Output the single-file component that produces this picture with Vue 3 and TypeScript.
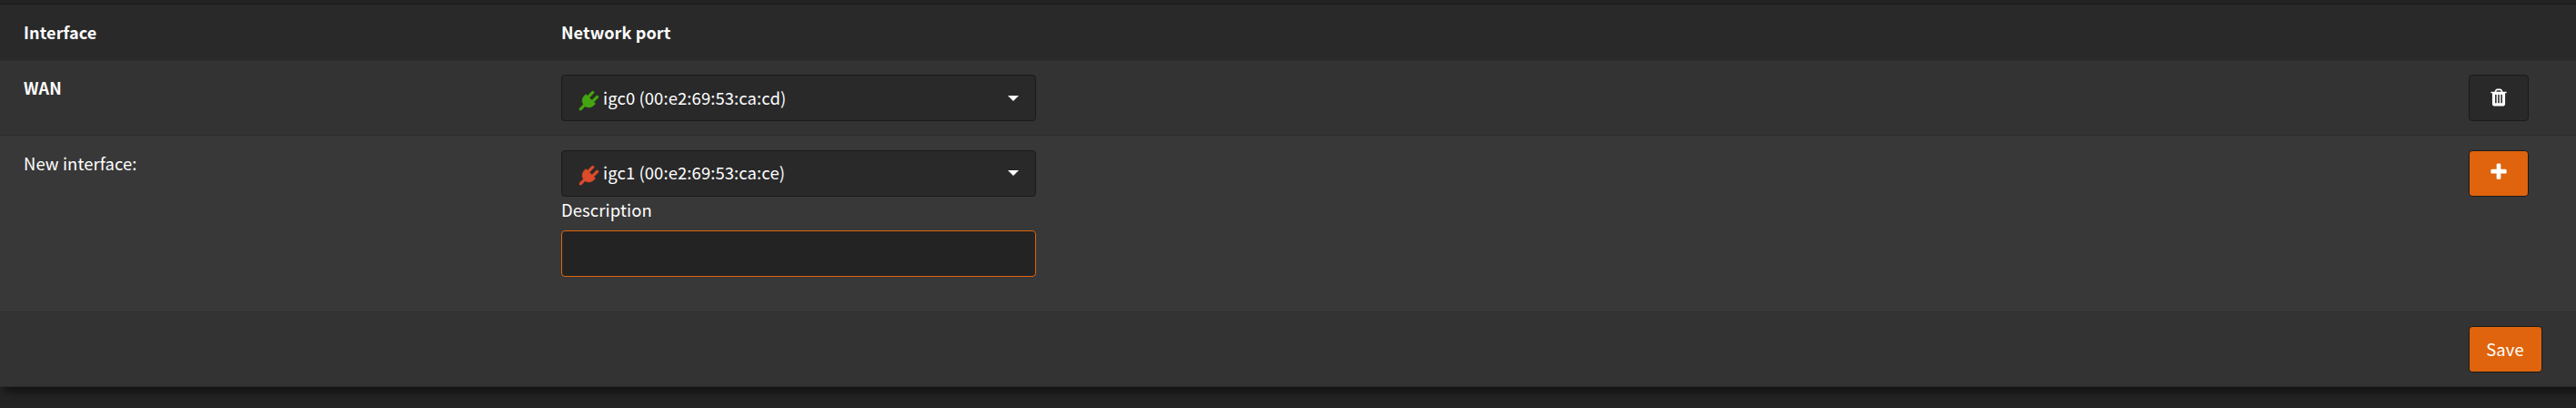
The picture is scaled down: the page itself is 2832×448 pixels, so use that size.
<script setup lang="ts">
interface Port {
  name: string
  mac: string
  up: boolean
}

const assigned: Port = { name: 'igc0', mac: '00:e2:69:53:ca:cd', up: true }
const available: Port = { name: 'igc1', mac: '00:e2:69:53:ca:ce', up: false }

const label = (port: Port): string => `${port.name} (${port.mac})`

const plug =
  'M1755 453q37 38 37 90.5t-37 90.5l-401 400 150 150-160 160q-163 163-389.5 186.5t-411.5-100.5l-362 362h-181v-181l362-362q-124-185-100.5-411.5t186.5-389.5l160-160 150 150 400-401q38-37 91-37t90 37 37 90.5-37 90.5l-400 401 234 234 401-400q38-37 91-37t90 37z'
const trash =
  'M704 1376v-704q0-14-9-23t-23-9h-64q-14 0-23 9t-9 23v704q0 14 9 23t23 9h64q14 0 23-9t9-23zm256 0v-704q0-14-9-23t-23-9h-64q-14 0-23 9t-9 23v704q0 14 9 23t23 9h64q14 0 23-9t9-23zm256 0v-704q0-14-9-23t-23-9h-64q-14 0-23 9t-9 23v704q0 14 9 23t23 9h64q14 0 23-9t9-23zm-544-992h448l-48-117q-7-9-17-11h-317q-10 2-17 11zm928 32v64q0 14-9 23t-23 9h-96v948q0 83-47 143.5t-113 60.5h-832q-66 0-113-58.5t-47-141.5v-952h-96q-14 0-23-9t-9-23v-64q0-14 9-23t23-9h309l70-167q15-37 54-63t79-26h320q40 0 79 26t54 63l70 167h309q14 0 23 9t9 23z'
const plus =
  'M1600 736v192q0 40-28 68t-68 28h-416v416q0 40-28 68t-68 28h-192q-40 0-68-28t-28-68v-416h-416q-40 0-68-28t-28-68v-192q0-40 28-68t68-28h416v-416q0-40 28-68t68-28h192q40 0 68 28t28 68v416h416q40 0 68 28t28 68z'
</script>

<template>
  <main class="page">
    <section class="panel">
      <div class="row head">
        <div class="cell strong">Interface</div>
        <div class="cell strong">Network port</div>
      </div>

      <div class="row wan">
        <div class="cell strong">WAN</div>
        <div class="cell">
          <button type="button" class="select">
            <svg class="plug" :class="{ up: assigned.up }" viewBox="0 0 1792 1792"><path :d="plug" /></svg>
            <span class="port">{{ label(assigned) }}</span>
            <svg class="caret" viewBox="0 0 12 6"><path d="M0 0h12L6 6z" /></svg>
          </button>
        </div>
        <div class="cell">
          <button type="button" class="btn" aria-label="Delete">
            <svg class="icon" viewBox="0 0 1792 1792"><path :d="trash" /></svg>
          </button>
        </div>
      </div>

      <div class="row fresh">
        <div class="cell">New interface:</div>
        <div class="cell">
          <button type="button" class="select raised">
            <svg class="plug" :class="{ up: available.up }" viewBox="0 0 1792 1792"><path :d="plug" /></svg>
            <span class="port">{{ label(available) }}</span>
            <svg class="caret" viewBox="0 0 12 6"><path d="M0 0h12L6 6z" /></svg>
          </button>
          <label class="desc" for="description">Description</label>
          <input id="description" class="field" type="text" />
        </div>
        <div class="cell">
          <button type="button" class="btn primary add" aria-label="Add">
            <svg class="icon" viewBox="0 0 1792 1792"><path :d="plus" /></svg>
          </button>
        </div>
      </div>

      <div class="row foot">
        <div class="cell"></div>
        <div class="cell"></div>
        <div class="cell">
          <button type="button" class="btn primary save">Save</button>
        </div>
      </div>
    </section>
  </main>
</template>

<style>
body {
  background: #242424;
}
</style>

<style scoped>
* {
  box-sizing: border-box;
}
.page {
  height: 448px;
  padding-top: 4px;
  overflow: hidden;
  background: #242424;
  color: #fff;
  font-family: 'Noto Sans CJK SC', 'Noto Sans', sans-serif;
  font-size: 18.4px;
  letter-spacing: 0.12px;
  line-height: 28px;
}
.panel {
  height: 421px;
  margin-right: -20px;
  box-shadow: 5px 6px 9px rgba(0, 0, 0, 0.5);
}
.row {
  display: grid;
  grid-template-columns: 617px 2097px 118px;
  width: 2852px;
  border-top: 1px solid #2e2e2e;
}
.cell:first-child {
  padding-left: 26px;
}
.strong {
  font-size: 18px;
  font-weight: 700;
}
.head {
  height: 62px;
  padding-top: 16px;
  border-top-color: #1a1a1a;
  background: #292929;
}
.wan {
  height: 82px;
  padding-top: 15px;
  background: #333;
}
.fresh {
  height: 194px;
  padding-top: 16px;
  background: #383838;
}
.foot {
  height: 83px;
  padding-top: 15px;
  background: #333;
  border-bottom: 1px solid #2a2a2a;
}
.select,
.btn {
  display: flex;
  align-items: center;
  height: 51px;
  border: 1px solid #1a1a1a;
  border-radius: 4px;
  background: #292929;
  color: #fff;
  font: inherit;
  letter-spacing: inherit;
}
.select {
  width: 522px;
  padding: 0 18px 0 19px;
}
.plug {
  width: 21px;
  height: 21px;
  margin-top: 6px;
  overflow: visible;
  fill: #dd4b2a;
  stroke: #dd4b2a;
  stroke-width: 40;
}
.plug.up {
  fill: #45a510;
  stroke: #45a510;
}
.port {
  margin-left: 5px;
  padding-bottom: 2px;
}
.caret {
  width: 12px;
  height: 6px;
  margin-left: auto;
  fill: #fff;
}
.select.raised {
  padding-bottom: 2px;
}
.btn {
  justify-content: center;
  width: 66px;
  padding: 0 1px 2px 0;
}
.btn.add {
  padding-bottom: 4px;
}
.icon {
  width: 22px;
  height: 22px;
  fill: #fff;
}
.primary {
  background: #df640d;
}
.btn.save {
  width: 81px;
}
.desc {
  display: block;
  height: 37px;
}
.field {
  display: block;
  width: 522px;
  height: 51px;
  padding: 0 18px;
  border: 1px solid #df640d;
  border-radius: 4px;
  outline: none;
  background: #232323;
  color: #fff;
  font: inherit;
}
</style>
